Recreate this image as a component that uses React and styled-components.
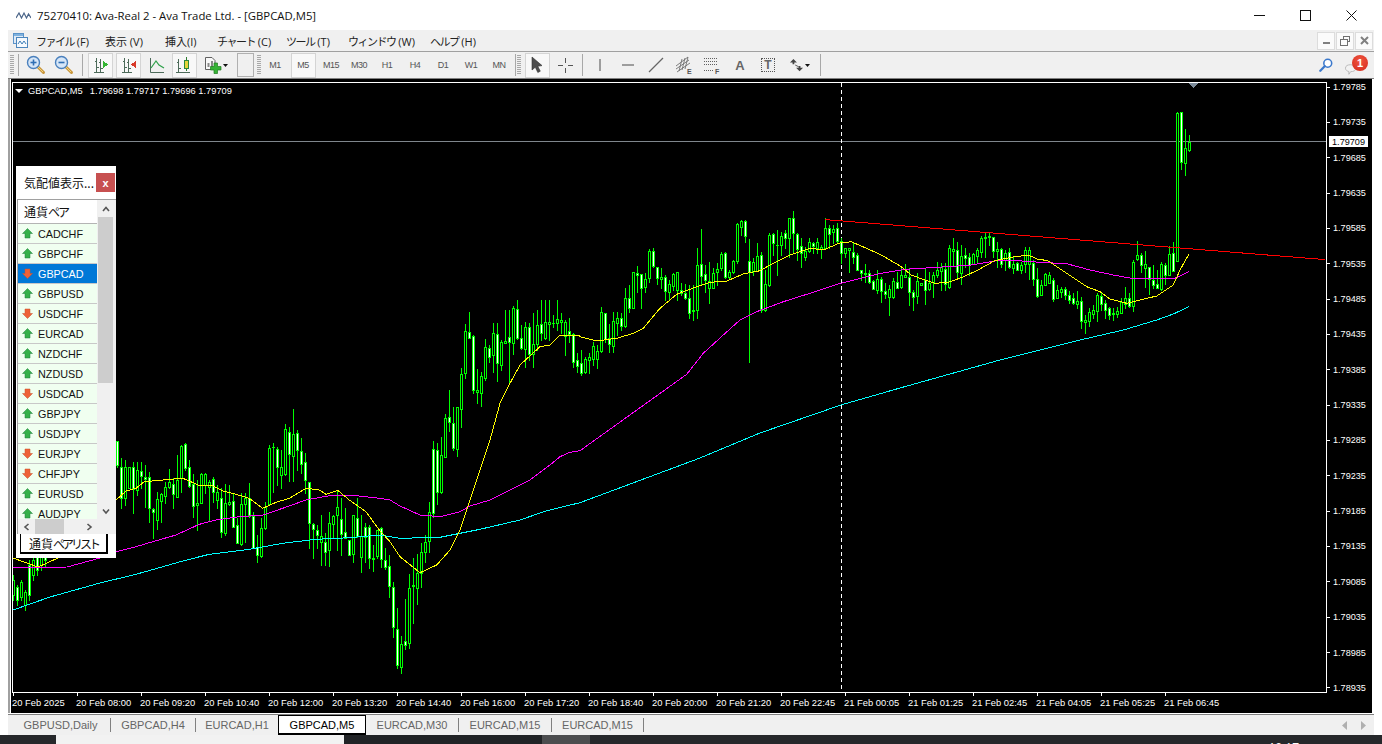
import { Fragment } from "react";
import styled, { createGlobalStyle } from "styled-components";

const GlobalStyle = createGlobalStyle`
  html, body {
    margin: 0;
    padding: 0;
    background: #ffffff;
  }
  * {
    box-sizing: border-box;
  }
`;

const UI_FONT = `"Liberation Sans", Arial, sans-serif`;
const JP_FONT = `"Open Sans", "Noto Sans CJK JP", sans-serif`;

const Page = styled.div`
  width: 1382px;
  height: 744px;
  display: flex;
  flex-direction: column;
  overflow: hidden;
  font-family: ${UI_FONT};
`;

const TitleBar = styled.div`
  height: 30px;
  display: flex;
  align-items: center;
  padding-left: 16px;
  padding-right: 8px;
  background: #ffffff;
`;

const TitleText = styled.span`
  margin-left: 6px;
  font-family: "Open Sans", sans-serif;
  font-size: 11.35px;
  color: #111111;
  white-space: nowrap;
`;

const WindowButtons = styled.div`
  margin-left: auto;
  display: flex;
`;

const WindowButton = styled.div`
  width: 46px;
  height: 30px;
  display: flex;
  align-items: center;
  justify-content: center;
`;

const Main = styled.div`
  margin: 0 8px;
  flex: 1;
  display: flex;
  flex-direction: column;
  min-height: 0;
`;

const MenuBar = styled.div`
  height: 22px;
  flex: none;
  display: flex;
  align-items: center;
  padding-left: 5px;
  background: #f0f0f0;
  border-bottom: 1px solid #a0a0a0;
`;

const MenuItems = styled.div`
  display: flex;
  gap: 19px;
  margin-left: 8px;
`;

const MenuItem = styled.span`
  width: ${(p) => p.$w}px;
  font-family: ${JP_FONT};
  font-size: 11px;
  color: #222222;
  white-space: nowrap;
`;

// the kana in the reference are set tighter than full width
const Kana = styled.span`
  letter-spacing: ${(p) => p.$tight || -1.5}px;
`;

const MdiButtons = styled.div`
  margin-left: auto;
  display: flex;
  gap: 1px;
  padding-right: 1px;
`;

const MdiButton = styled.div`
  width: 18px;
  height: 18px;
  display: flex;
  align-items: center;
  justify-content: center;
  background: #fbfbfb;
  border: 1px solid #dcdcdc;
`;

const ToolBar = styled.div`
  height: 27px;
  flex: none;
  display: flex;
  align-items: center;
  padding-left: 2px;
  background: #f0f0f0;
  border-bottom: 1px solid #808080;
`;

const Grip = styled.div`
  width: 4px;
  height: 20px;
  flex: none;
  margin-left: ${(p) => p.$ml || 0}px;
  background: repeating-linear-gradient(
    to bottom,
    #a8a8a8 0,
    #a8a8a8 1px,
    #f0f0f0 1px,
    #f0f0f0 2px
  );
`;

const Separator = styled.div`
  width: 1px;
  height: 22px;
  flex: none;
  margin-left: ${(p) => p.$ml || 0}px;
  margin-right: ${(p) => p.$mr || 0}px;
  background: #a8a8a8;
`;

const ToolCell = styled.div`
  width: ${(p) => (p.$active ? 25 : p.$w || 28)}px;
  height: ${(p) => (p.$active ? 25 : 22)}px;
  margin: 0 ${(p) => (p.$active ? 1.5 : 0)}px;
  flex: none;
  display: flex;
  align-items: center;
  justify-content: center;
  position: relative;
  background: ${(p) => (p.$active ? "#f8f8f8" : "transparent")};
  border: ${(p) => (p.$active ? "1px solid #d4d4d4" : "none")};
`;

const DropCell = styled(ToolCell)`
  justify-content: flex-start;
  gap: 1px;
  padding-left: ${(p) => p.$pad}px;
`;

const ChatCell = styled(ToolCell)`
  justify-content: flex-start;
  align-items: flex-end;
  padding-left: 0;
`;

const FrameLabel = styled.span`
  font-size: 9px;
  letter-spacing: -0.5px;
  color: #555555;
`;

const DrawLetter = styled.span`
  font-size: 13px;
  font-weight: 700;
  color: #666666;
`;

const TextBoxTool = styled.span`
  width: 14px;
  height: 14px;
  display: flex;
  align-items: center;
  justify-content: center;
  border: 1px dotted #555555;
  font-size: 12px;
  font-weight: 700;
  color: #666666;
`;

const EmptyBox = styled.div`
  width: 17px;
  height: 24px;
  flex: none;
  margin-left: 9px;
  border: 1px solid #b0b0b0;
`;

const ToolSpacer = styled.div`
  flex: 1;
`;

const Group = styled.div`
  display: flex;
  align-items: center;
  margin-left: ${(p) => p.$ml || 0}px;
  margin-right: ${(p) => p.$mr || 0}px;
  gap: ${(p) => p.$gap || 0}px;
`;

const Badge = styled.span`
  position: absolute;
  top: 1px;
  left: 8px;
  width: 16px;
  height: 16px;
  border-radius: 50%;
  display: flex;
  align-items: center;
  justify-content: center;
  background: radial-gradient(circle at 50% 35%, #f0553f, #d42a1c);
  color: #ffffff;
  font-size: 11px;
  font-weight: 700;
`;

const ChartWrap = styled.div`
  height: 634px;
  flex: none;
  display: flex;
  border-left: 2px solid #a0a0a0;
  padding-left: 1px;
  padding-right: 2px;
  background: #ffffff;
`;

const ChartWindow = styled.div`
  flex: 1;
  position: relative;
  display: grid;
  grid-template-columns: 1315px 1fr;
  grid-template-rows: 614px 20px;
  padding-left: 1px;
  background: #000000;
`;

const PlotFrame = styled.div`
  margin-top: 3px;
  position: relative;
  border: 1px solid #ffffff;
  overflow: hidden;
  line-height: 0;
`;

const SymbolCaption = styled.div`
  position: absolute;
  top: 2px;
  left: 2px;
  display: flex;
  align-items: center;
  height: 12px;
  font-size: 9.3px;
  line-height: 12px;
  color: #ffffff;
  white-space: nowrap;
`;

const CaptionArrow = styled.span`
  width: 0;
  height: 0;
  margin-right: 5px;
  border-left: 4px solid transparent;
  border-right: 4px solid transparent;
  border-top: 4px solid #ffffff;
`;

const CaptionPrices = styled.span`
  margin-left: 7px;
`;

const PriceAxis = styled.div`
  position: relative;
  display: flex;
  flex-direction: column;
  justify-content: space-between;
  margin-top: 2px;
  margin-bottom: -1px;
`;

const PriceLabel = styled.div`
  height: 12px;
  display: flex;
  align-items: center;
  font-size: 9.1px;
  color: #ffffff;
`;

const PriceTick = styled.span`
  width: 3px;
  height: 1px;
  margin-right: 3px;
  background: #ffffff;
`;

const CurrentPrice = styled.div`
  position: absolute;
  top: 55px;
  left: 2px;
  width: 39px;
  height: 11px;
  display: flex;
  align-items: center;
  justify-content: center;
  background: #ffffff;
  color: #000000;
  font-size: 9.1px;
`;

const TimeAxis = styled.div`
  grid-column: 1 / span 2;
  display: flex;
  color: #ffffff;
`;

const TimeCell = styled.div`
  width: 64px;
  flex: none;
  display: flex;
  flex-direction: column;
`;

const TimeTick = styled.span`
  width: 1px;
  height: 3px;
  margin-left: 1px;
  background: #ffffff;
`;

const TimeLabel = styled.span`
  margin-top: 1px;
  font-size: 9.4px;
  line-height: 12px;
  white-space: nowrap;
`;

const WatchPanel = styled.div`
  position: absolute;
  top: 87px;
  left: 5px;
  width: 100px;
  height: 392px;
  display: flex;
  flex-direction: column;
  background: #ffffff;
`;

const PanelHead = styled.div`
  height: 33px;
  flex: none;
  display: flex;
  align-items: center;
  padding: 0 1px 0 8px;
  justify-content: space-between;
`;

const PanelTitle = styled.span`
  font-family: "Noto Sans CJK JP", sans-serif;
  font-size: 12px;
  color: #111111;
  white-space: nowrap;
`;

const PanelClose = styled.div`
  width: 19px;
  height: 19px;
  display: flex;
  align-items: center;
  justify-content: center;
  background: #c75050;
  color: #ffffff;
  font-size: 11px;
  font-weight: 700;
`;

const PanelBody = styled.div`
  height: 335px;
  flex: none;
  margin-left: 1px;
  padding-right: 3px;
  display: grid;
  grid-template-columns: 79px 16px;
  grid-template-rows: 319px 16px;
  border-top: 1px solid #a0a0a0;
  border-left: 1px solid #a0a0a0;
  background: #f0f0f0;
`;

const PairList = styled.div`
  overflow: hidden;
  background: #ffffff;
`;

const PairHeader = styled.div`
  height: 24px;
  display: flex;
  align-items: center;
  padding-left: 6px;
  border-bottom: 1px solid #b4b4b4;
  font-family: "Noto Sans CJK JP", sans-serif;
  font-size: 12px;
  color: #111111;
`;

const PairRow = styled.div`
  height: 20px;
  display: flex;
  align-items: center;
  gap: 5px;
  padding-left: 4px;
  border-bottom: 1px solid #c8c8c8;
  background: ${(p) => (p.$selected ? "#0078d7" : "#f0fff0")};
  color: ${(p) => (p.$selected ? "#ffffff" : "#111111")};
  font-size: 10.8px;
`;

const VScroll = styled.div`
  margin-left: 1px;
  display: flex;
  flex-direction: column;
  align-items: stretch;
  background: #f0f0f0;
`;

const ScrollButton = styled.div`
  height: ${(p) => p.$h || 17}px;
  flex: none;
  display: flex;
  align-items: center;
  justify-content: center;
`;

const VThumb = styled.div`
  height: 166px;
  flex: none;
  background: #cdcdcd;
`;

const VTrack = styled.div`
  flex: 1;
`;

const HScroll = styled.div`
  display: flex;
  align-items: center;
  background: #f0f0f0;
`;

const HButton = styled.div`
  width: 17px;
  flex: none;
  display: flex;
  justify-content: center;
`;

const HThumb = styled.div`
  width: 29px;
  height: 16px;
  flex: none;
  background: #cdcdcd;
`;

const HTrack = styled.div`
  flex: 1;
`;

const PanelTabs = styled.div`
  flex: 1;
  padding: 0 0 3px 4px;
  display: flex;
  align-items: flex-start;
  background: #ffffff;
`;

const PanelTab = styled.div`
  width: 88px;
  height: 20px;
  display: flex;
  align-items: center;
  justify-content: center;
  border: 1px solid #000000;
  border-top: none;
  border-right-width: 2px;
  border-bottom-width: 2px;
  font-family: "Noto Sans CJK JP", sans-serif;
  font-size: 12px;
  color: #111111;
  white-space: nowrap;
`;

const TabRule = styled.div`
  height: 2px;
  flex: none;
  border-bottom: 1px solid #808080;
  background: #ffffff;
`;

const TabBar = styled.div`
  height: 20px;
  flex: none;
  display: flex;
  align-items: stretch;
  padding-left: 3px;
  background: #f0f0f0;
`;

const ChartTab = styled.div`
  display: flex;
  align-items: center;
  justify-content: center;
  width: ${(p) => p.$w}px;
  font-size: 11px;
  white-space: nowrap;
  color: ${(p) => (p.$active ? "#000000" : "#666666")};
  background: ${(p) => (p.$active ? "#ffffff" : "transparent")};
  border-top: ${(p) => (p.$active ? "1px solid #000000" : "none")};
  border-left: ${(p) => (p.$active ? "1px solid #000000" : "none")};
  border-right: ${(p) => (p.$active ? "1px solid #000000" : "none")};
  border-bottom: ${(p) => (p.$active ? "2px solid #000000" : "none")};
`;

const TabDivider = styled.span`
  width: 1px;
  height: 14px;
  flex: none;
  align-self: center;
  background: #808080;
`;

const TabArrows = styled.div`
  margin-left: auto;
  display: flex;
  align-items: center;
  gap: 14px;
  padding-right: 8px;
`;

const TaskBar = styled.div`
  height: 9px;
  flex: none;
  display: flex;
  background: #26282b;
  overflow: hidden;
`;

const TaskSlot = styled.div`
  width: ${(p) => p.$w}px;
  flex: none;
  background: ${(p) => p.$bg};
`;

const TaskClock = styled.div`
  margin-left: auto;
  margin-right: 83px;
  padding-top: 6px;
  font-family: "Open Sans", sans-serif;
  font-size: 12px;
  line-height: 14px;
  color: #ffffff;
`;

// chart rows: wick top, wick bottom, body top, body bottom, 1 = white body
// values were read off 3x crops, so they are divided by 3 below
const candleRuns = [
  {
    x: 117,
    y: 405,
    rows: [
      [108, 185, 108, 180, 1], [160, 310, 185, 280, 1], [165, 300, 186, 280], [186, 250, 186, 250],
      [170, 325, 187, 252, 1], [172, 270, 195, 254], [170, 250, 197, 214, 1], [180, 305, 216, 221, 1],
      [200, 350, 217, 310, 1], [310, 400, 313, 320, 1], [262, 372, 283, 345], [265, 350, 268, 287],
      [230, 295, 247, 272], [192, 250, 232, 245], [220, 310, 238, 268, 1], [150, 275, 224, 275],
      [120, 260, 122, 220], [115, 195, 118, 188, 1], [165, 245, 187, 242, 1], [208, 335, 238, 304, 1],
      [225, 375, 295, 299], [205, 295, 208, 295], [205, 265, 208, 240], [225, 345, 230, 245],
      [215, 290, 222, 260, 1], [240, 310, 260, 284], [250, 395, 280, 382, 1], [238, 390, 295, 385],
      [240, 300, 290, 298], [265, 365, 288, 365, 1], [340, 412, 360, 413, 1], [265, 420, 298, 416],
      [265, 410, 280, 297], [235, 335, 280, 332, 1], [320, 430, 332, 430, 1], [390, 472, 427, 450, 1],
      [340, 455, 370, 452], [290, 372, 305, 368], [120, 300, 130, 296], [115, 260, 125, 127],
      [125, 240, 132, 187, 1], [135, 250, 185, 209], [58, 210, 73, 206], [65, 228, 82, 148, 1],
      [12, 228, 88, 152], [75, 195, 85, 135, 1], [100, 205, 137, 176, 1], [145, 265, 172, 225, 1],
      [232, 430, 232, 355, 1], [355, 460, 358, 373, 1], [360, 430, 375, 391, 1], [330, 480, 392, 412],
      [385, 480, 412, 440, 1], [320, 482, 355, 434], [330, 400, 332, 356], [255, 435, 305, 329],
      [280, 450, 343, 386, 1], [310, 400, 382, 400, 1], [405, 450, 405, 450, 1], [330, 470, 330, 447],
      [280, 395, 340, 392, 1], [330, 500, 392, 455], [355, 470, 367, 397, 1], [360, 490, 367, 460, 1],
      [420, 497, 460, 462], [375, 460, 375, 452],
    ],
  },
  {
    x: 381,
    y: 300,
    rows: [
      [682, 800, 685, 778, 1], [745, 808, 780, 802, 1], [765, 890, 798, 858, 1], [845, 1010, 862, 980, 1],
      [925, 1105, 988, 1095, 1], [1008, 1118, 1033, 1100], [897, 1048, 1023, 1034, 1], [822, 1045, 865, 1030],
      [775, 968, 855, 857], [762, 912, 820, 863], [728, 862, 757, 820], [705, 785, 727, 755],
      [607, 757, 635, 724], [422, 650, 448, 638, 1], [430, 612, 451, 575, 1], [412, 578, 466, 575],
      [342, 472, 355, 470], [270, 392, 352, 365, 1], [322, 450, 370, 443, 1], [322, 467, 322, 446],
      [205, 380, 222, 328], [72, 235, 94, 218], [37, 115, 97, 113, 1], [105, 278, 108, 270, 1],
      [208, 310, 270, 275], [215, 318, 228, 278], [118, 240, 142, 235], [135, 185, 145, 170, 1],
      [68, 215, 100, 164], [68, 242, 103, 190, 1], [120, 210, 127, 194], [30, 130, 122, 128],
      [30, 250, 112, 125, 1], [18, 162, 25, 128], [0, 118, 28, 115, 1], [75, 148, 113, 143, 1],
      [65, 200, 82, 146], [70, 180, 82, 162, 1], [40, 200, 133, 163], [30, 150, 76, 133],
      [0, 120, 72, 100, 1], [0, 118, 67, 115], [0, 120, 67, 71], [45, 80, 68, 70],
      [0, 90, 58, 70], [40, 100, 60, 65], [60, 165, 67, 108], [55, 125, 92, 103, 1],
      [100, 200, 103, 185, 1], [160, 215, 180, 197, 1],
    ],
  },
  {
    x: 581,
    y: 205,
    rows: [
      [435, 510, 475, 505, 1], [455, 505, 462, 500], [445, 505, 455, 465], [410, 480, 423, 461],
      [420, 490, 438, 461], [305, 440, 320, 437], [325, 410, 325, 402, 1], [358, 440, 400, 418, 1],
      [320, 440, 349, 422], [320, 390, 340, 355], [325, 375, 340, 362, 1], [250, 365, 280, 364],
      [240, 320, 280, 310, 1], [202, 310, 202, 310], [183, 260, 205, 210, 1], [208, 308, 208, 248, 1],
      [205, 262, 222, 245], [133, 230, 138, 218], [130, 185, 137, 182, 1], [185, 238, 187, 218, 1],
      [190, 250, 217, 221], [210, 285, 217, 257, 1], [225, 285, 238, 260], [205, 255, 207, 242],
      [200, 285, 202, 254], [235, 270, 254, 265, 1], [238, 282, 264, 280, 1], [240, 340, 280, 325, 1],
      [240, 345, 316, 319], [130, 340, 180, 316], [72, 240, 178, 213, 1], [180, 260, 208, 225, 1],
      [170, 295, 227, 248], [190, 250, 205, 250], [175, 240, 193, 202], [140, 195, 148, 190],
      [140, 220, 145, 217, 1], [195, 220, 202, 216], [165, 205, 167, 202], [55, 175, 58, 167],
      [45, 90, 49, 65], [45, 110, 48, 92, 1], [102, 470, 167, 201, 1], [160, 210, 172, 198],
      [115, 195, 152, 198], [140, 320, 150, 316, 1], [195, 318, 238, 316], [85, 242, 90, 241],
      [85, 150, 88, 115, 1], [75, 210, 121, 121], [80, 150, 92, 121], [75, 130, 85, 100, 1],
      [40, 155, 40, 100], [18, 145, 40, 85, 1], [85, 165, 88, 132, 1], [100, 187, 122, 145, 1],
      [125, 165, 138, 155], [100, 140, 112, 138], [110, 145, 115, 122, 1], [100, 145, 112, 128],
      [120, 160, 125, 132], [40, 130, 70, 128], [60, 130, 70, 87, 1], [60, 115, 72, 82],
      [55, 115, 70, 108, 1],
    ],
  },
  {
    x: 841,
    y: 205,
    rows: [
      [100, 175, 107, 143, 1], [130, 155, 130, 143], [128, 200, 130, 135], [110, 175, 140, 155, 1],
      [145, 195, 151, 194, 1], [195, 225, 196, 203, 1], [178, 230, 203, 206], [195, 235, 203, 230, 1],
      [225, 250, 229, 252, 1], [195, 265, 222, 256], [215, 290, 222, 257, 1], [235, 278, 259, 267, 1],
      [240, 330, 253, 276], [220, 280, 228, 276], [200, 250, 232, 248, 1], [185, 250, 210, 245],
      [178, 215, 211, 216], [190, 300, 215, 260, 1], [255, 315, 262, 275, 1], [205, 295, 229, 272],
      [235, 240, 235, 240], [193, 297, 225, 254, 1], [200, 255, 235, 252], [200, 275, 210, 232],
      [172, 215, 195, 209], [175, 255, 187, 199], [175, 255, 193, 238, 1], [120, 250, 128, 245],
      [98, 180, 133, 137], [110, 215, 136, 202, 1], [120, 237, 154, 203], [130, 185, 150, 158, 1],
      [145, 210, 156, 180, 1], [145, 175, 148, 178], [130, 175, 135, 152], [92, 155, 99, 140],
      [85, 155, 95, 98], [85, 120, 95, 93], [95, 155, 97, 137, 1], [110, 185, 133, 137],
      [130, 185, 133, 178, 1], [135, 195, 145, 165], [130, 190, 142, 185, 1], [155, 205, 178, 188],
      [170, 195, 175, 194, 1], [170, 205, 181, 194], [125, 200, 135, 178], [125, 222, 136, 178],
      [165, 240, 175, 222, 1], [190, 275, 222, 272, 1],
    ],
  },
  {
    x: 1041,
    y: 90,
    rows: [
      [570, 615, 585, 615], [548, 585, 552, 585], [545, 580, 555, 578], [565, 632, 570, 628, 1],
      [585, 625, 600, 625], [590, 622, 597, 606], [592, 628, 597, 615, 1], [603, 640, 616, 630, 1],
      [610, 642, 625, 640, 1], [603, 655, 633, 642], [620, 715, 633, 693, 1], [675, 728, 690, 695],
      [655, 708, 667, 693], [645, 685, 660, 673], [610, 692, 616, 662], [610, 660, 618, 642, 1],
      [630, 685, 640, 660, 1], [650, 688, 655, 675, 1], [655, 690, 670, 672], [650, 680, 663, 673],
      [625, 670, 636, 668], [590, 655, 625, 642], [610, 650, 625, 647, 1], [510, 662, 515, 647],
      [453, 510, 496, 506], [490, 545, 495, 524, 1], [483, 590, 523, 533], [530, 612, 532, 568, 1],
      [525, 595, 570, 584, 1], [540, 592, 583, 594, 1], [515, 600, 522, 597], [520, 582, 526, 555, 1],
      [468, 555, 492, 554], [455, 540, 490, 542, 1], [66, 512, 70, 512], [66, 236, 66, 215, 1],
      [118, 255, 175, 218], [135, 182, 155, 179],
    ],
  },
  {
    x: 13,
    y: 0,
    rows: [
      [1725, 1800, 1740, 1785], [1755, 1815, 1760, 1800, 1], [1740, 1800, 1745, 1790], [1770, 1830, 1775, 1815],
      [1680, 1800, 1695, 1785, 1], [1668, 1740, 1680, 1725], [1650, 1725, 1665, 1710, 1], [1650, 1710, 1660, 1695],
      [1640, 1700, 1650, 1680, 1],
    ],
  },
];

const candles = candleRuns.flatMap((run) =>
  run.rows.map(([wt, wb, bt, bb, white], i) => ({
    x: run.x + i * 4,
    wickTop: Math.round(run.y + wt / 3),
    wickBottom: Math.round(run.y + wb / 3),
    bodyTop: Math.round(run.y + Math.min(bt, bb) / 3),
    bodyBottom: Math.round(run.y + Math.max(bt, bb) / 3),
    white: !!white,
  }))
);

const seg = (x0, y0, pts) => pts.map(([x, y]) => [x0 + x / 3, y0 + y / 3]);

const yellowLine = [
  [13, 558], [38, 567], [58, 558], [90, 530],
  ...seg(116, 405, [[0, 285], [30, 258], [60, 250], [85, 230], [140, 225], [200, 220], [225, 230], [245, 240], [290, 242], [320, 258], [360, 268], [400, 280], [440, 310], [480, 292], [520, 280], [570, 250], [610, 255], [630, 268], [665, 256], [700, 285], [750, 320], [790, 375]]),
  ...seg(380, 300, [[30, 725], [60, 770], [120, 818], [170, 795], [210, 750], [240, 690], [270, 600], [300, 510], [330, 420], [360, 310], [390, 250], [420, 195], [480, 140], [510, 135], [540, 105], [598, 105]]),
  ...seg(580, 205, [[0, 395], [50, 408], [110, 400], [160, 385], [190, 370], [240, 310], [290, 268], [350, 245], [390, 232], [440, 228], [490, 207], [540, 197], [570, 180], [630, 150], [690, 130], [730, 135], [770, 118]]),
  ...seg(838, 205, [[0, 115], [40, 110], [90, 132], [130, 150], [190, 185], [220, 210], [260, 225], [290, 235], [330, 232], [370, 218], [420, 195], [470, 167], [520, 157], [570, 150], [605, 165]]),
  ...seg(1040, 90, [[0, 508], [25, 513], [80, 550], [140, 590], [180, 605], [210, 627], [260, 640], [300, 630], [350, 618], [400, 585], [420, 540], [447, 492]]),
];

const magentaLine = [
  [13, 568], [67, 567], [100, 558],
  ...seg(116, 405, [[0, 440], [50, 428], [110, 410], [180, 390], [250, 358], [300, 345], [370, 335], [440, 330], [500, 310], [570, 285], [640, 272], [720, 272], [790, 280]]),
  ...seg(380, 300, [[30, 600], [60, 618], [120, 645], [180, 650], [240, 635], [270, 618], [330, 600], [390, 570], [450, 540], [510, 495], [540, 470], [570, 457], [600, 452]]),
  ...seg(580, 205, [[320, 508], [370, 445], [430, 390], [480, 345], [530, 320], [610, 290], [690, 265], [775, 237]]),
  ...seg(838, 205, [[0, 237], [60, 222], [130, 205], [200, 193], [300, 187], [400, 180], [470, 168], [540, 167], [605, 172]]),
  ...seg(1040, 90, [[0, 517], [80, 521], [150, 540], [220, 555], [280, 566], [400, 567], [447, 545]]),
];

const cyanLine = [
  [13, 610], [50, 597], [100, 583],
  ...seg(116, 405, [[60, 508], [130, 488], [200, 468], [280, 448], [400, 433], [500, 415], [600, 403], [700, 398], [790, 390]]),
  ...seg(380, 300, [[60, 715], [180, 712], [300, 688], [420, 660], [500, 632], [600, 608]]),
  [700, 458], [760, 433], [841, 405], [900, 388], [1000, 360],
  ...seg(1040, 90, [[129, 748], [250, 720], [350, 690], [400, 672], [447, 650]]),
];

const toPoints = (line) => line.map(([x, y]) => `${x.toFixed(1)},${y.toFixed(1)}`).join(" ");

const prices = [
  "1.79785", "1.79735", "1.79685", "1.79635", "1.79585", "1.79535", "1.79485", "1.79435", "1.79385",
  "1.79335", "1.79285", "1.79235", "1.79185", "1.79135", "1.79085", "1.79035", "1.78985", "1.78935",
];

const times = [
  "20 Feb 2025", "20 Feb 08:00", "20 Feb 09:20", "20 Feb 10:40", "20 Feb 12:00", "20 Feb 13:20", "20 Feb 14:40",
  "20 Feb 16:00", "20 Feb 17:20", "20 Feb 18:40", "20 Feb 20:00", "20 Feb 21:20", "20 Feb 22:45", "21 Feb 00:05",
  "21 Feb 01:25", "21 Feb 02:45", "21 Feb 04:05", "21 Feb 05:25", "21 Feb 06:45",
];

const pairs = [
  ["CADCHF", "up"], ["GBPCHF", "up"], ["GBPCAD", "down", true], ["GBPUSD", "up"], ["USDCHF", "down"],
  ["EURCAD", "up"], ["NZDCHF", "up"], ["NZDUSD", "up"], ["USDCAD", "down"], ["GBPJPY", "up"],
  ["USDJPY", "up"], ["EURJPY", "down"], ["CHFJPY", "down"], ["EURUSD", "up"], ["AUDJPY", "up"],
];

const menus = [
  { kana: "ファイル", rest: " (F)", w: 50 },
  { rest: "表示 (V)", w: 41 },
  { rest: "挿入(I)", w: 33 },
  { kana: "チャート", rest: " (C)", w: 50 },
  { kana: "ツール", rest: " (T)", w: 43 },
  { kana: "ウィンドウ", rest: " (W)", w: 63 },
  { kana: "ヘルプ", rest: " (H)", w: 48 },
];
const frames = ["M1", "M5", "M15", "M30", "H1", "H4", "D1", "W1", "MN"];

const tabs = [
  { label: "GBPUSD,Daily", w: 99, divider: true },
  { label: "GBPCAD,H4", w: 84, divider: true },
  { label: "EURCAD,H1", w: 82 },
  { label: "GBPCAD,M5", w: 88, active: true },
  { label: "EURCAD,M30", w: 92, divider: true },
  { label: "EURCAD,M15", w: 92, divider: true },
  { label: "EURCAD,M15", w: 91, divider: true },
];

function CandleChart() {
  return (
    <svg width="1313" height="609" viewBox="13 83 1313 609" shapeRendering="crispEdges">
      <line x1="13" y1="141.5" x2="1326" y2="141.5" stroke="#7f868c" />
      <line x1="841.5" y1="83" x2="841.5" y2="692" stroke="#ffffff" strokeDasharray="4 3" />
      {candles.map((c) => (
        <g key={c.x}>
          <rect x={c.x} y={c.wickTop} width="1" height={c.wickBottom - c.wickTop + 1} fill="#00ff00" />
          <rect x={c.x - 1} y={c.bodyTop} width="3" height={c.bodyBottom - c.bodyTop + 1} fill="#00ff00" />
          {c.bodyBottom - c.bodyTop > 1 && (
            <rect
              x={c.x}
              y={c.bodyTop + 1}
              width="1"
              height={c.bodyBottom - c.bodyTop - 1}
              fill={c.white ? "#ffffff" : "#000000"}
            />
          )}
        </g>
      ))}
      <polyline points={toPoints(cyanLine)} fill="none" stroke="#00ffff" />
      <polyline points={toPoints(magentaLine)} fill="none" stroke="#ff00ff" />
      <polyline points={toPoints(yellowLine)} fill="none" stroke="#ffff00" />
      <line x1="825" y1="219.6" x2="1325" y2="259.6" stroke="#ff0000" />
      <polygon points="1189,83 1198,83 1193.5,88" fill="#7b8a99" />
    </svg>
  );
}

function LogoIcon() {
  return (
    <svg width="15" height="8" viewBox="0 0 15 8">
      <path d="M0 7 L3 2 L5.5 7 L8 2 L10.5 7 L12.5 3 L15 7" fill="none" stroke="#4a6488" strokeWidth="1.2" />
    </svg>
  );
}

function MenuChartIcon() {
  return (
    <svg width="15" height="15" viewBox="0 0 15 15">
      <rect x="0.5" y="0.5" width="10" height="10" fill="#dfeaf6" stroke="#5b93c9" />
      <rect x="3.5" y="4.5" width="11" height="10" fill="#f5f9fd" stroke="#4c86bd" />
      <path d="M5 11 L7 8 L9 11 L11 8 L13 11" fill="none" stroke="#3f7fb8" />
      <rect x="1" y="1" width="9" height="2" fill="#7fb2de" />
    </svg>
  );
}

function ZoomIcon({ plus }) {
  return (
    <svg width="20" height="20" viewBox="0 0 20 20">
      <path d="M11 11 L17.5 17.5" stroke="#c8963c" strokeWidth="3" strokeLinecap="round" />
      <path d="M11.5 11.5 L17 17" stroke="#f2d27a" strokeWidth="1" />
      <circle cx="7.5" cy="7.5" r="6" fill="#d6e6f7" stroke="#4a80bd" strokeWidth="1.4" />
      <path d="M4.5 7.5 H10.5" stroke="#2f6fb4" strokeWidth="1.6" />
      {plus && <path d="M7.5 4.5 V10.5" stroke="#2f6fb4" strokeWidth="1.6" />}
    </svg>
  );
}

function BarsIcon({ kind }) {
  return (
    <svg width="17" height="18" viewBox="0 0 17 18" shapeRendering="crispEdges">
      <path d="M2 16.5 H12 M4.5 2 V16 M2.5 5.5 H4.5 M4.5 11.5 H6.5" stroke="#4d6b5a" fill="none" />
      <path d="M8.5 3 V16 M6.5 6.5 H8.5 M8.5 12.5 H10.5" stroke="#4d6b5a" fill="none" />
      {kind === "play" && <polygon points="11,5 16,8.5 11,12" fill="#33b533" />}
      {kind === "back" && <polygon points="16,5 11,8.5 16,12" fill="#d83a2a" />}
    </svg>
  );
}

function LineChartIcon() {
  return (
    <svg width="17" height="18" viewBox="0 0 17 18">
      <path d="M2.5 2 V16.5 H16" stroke="#4d6b5a" fill="none" />
      <path d="M3 12 L8 5 L11 9 L16 12" stroke="#2ea04a" fill="none" strokeWidth="1.2" />
    </svg>
  );
}

function CandleToolIcon() {
  return (
    <svg width="18" height="18" viewBox="0 0 18 18" shapeRendering="crispEdges">
      <path d="M1 16.5 H15 M3.5 3 V16 M1.5 6.5 H3.5 M3.5 12.5 H5.5" stroke="#4d6b5a" fill="none" />
      <path d="M11.5 1 V15" stroke="#2e7d32" fill="none" />
      <rect x="9.5" y="4.5" width="4" height="8" fill="#e6d53a" stroke="#2e8b3a" />
    </svg>
  );
}

function NewChartIcon() {
  return (
    <svg width="18" height="18" viewBox="0 0 18 18">
      <path d="M1.5 1.5 H8 L11 4.5 V13.5 H1.5 Z" fill="#f8f8f8" stroke="#606060" />
      <path d="M3.5 7 H5.5 V11 H3.5 Z M7 5 H9 V11 H7 Z" fill="#888888" />
      <path d="M10 7 H13.5 V10.5 H17 V14 H13.5 V17.5 H10 V14 H6.5 V10.5 H10 Z" fill="#36b336" stroke="#1f7d1f" strokeWidth="0.7" />
    </svg>
  );
}

function Caret() {
  return (
    <svg width="5" height="3" viewBox="0 0 5 3">
      <polygon points="0,0 5,0 2.5,3" fill="#111111" />
    </svg>
  );
}

function CursorIcon() {
  return (
    <svg width="14" height="18" viewBox="0 0 14 18">
      <polygon points="2,1 2,14 5.3,11.2 7.8,16.5 10.3,15.2 7.8,10.3 12,9.6" fill="#4c4c4c" stroke="#303030" strokeWidth="0.6" />
    </svg>
  );
}

function CrosshairIcon() {
  return (
    <svg width="17" height="17" viewBox="0 0 17 17" shapeRendering="crispEdges">
      <path d="M8.5 1 V6 M8.5 11 V16 M1 8.5 H6 M11 8.5 H16" stroke="#555555" fill="none" />
    </svg>
  );
}

function StrokeIcon({ d }) {
  return (
    <svg width="16" height="16" viewBox="0 0 16 16">
      <path d={d} stroke="#666666" strokeWidth="1.2" fill="none" />
    </svg>
  );
}

function FiboChannelIcon() {
  return (
    <svg width="18" height="18" viewBox="0 0 18 18">
      <path d="M1 10 L13 1 M1 13 L14 4 M2 16 L15 7 M4 15 L7 3 M7 14 L10 2 M10 13 L13 1" stroke="#707070" strokeWidth="0.9" fill="none" />
      <text x="12" y="17.5" fontSize="7" fontWeight="700" fontFamily="Liberation Sans" fill="#555555">E</text>
    </svg>
  );
}

function FiboLevelsIcon() {
  return (
    <svg width="18" height="18" viewBox="0 0 18 18" shapeRendering="crispEdges">
      <path d="M1 2.5 H15 M1 5.5 H15 M1 8.5 H15 M1 14.5 H11" stroke="#606060" strokeDasharray="1 1" fill="none" />
      <text x="12" y="17.5" fontSize="7" fontWeight="700" fontFamily="Liberation Sans" fill="#555555">F</text>
    </svg>
  );
}

function ArrowsIcon() {
  return (
    <svg width="15" height="14" viewBox="0 0 17 16">
      <polygon points="5,1 9,5 6,5 6,7 4,7 4,5 1,5" fill="#444444" />
      <polygon points="12,15 16,11 13,11 13,9 11,9 11,11 8,11" fill="#444444" />
      <path d="M7 8 L11 10" stroke="#444444" />
    </svg>
  );
}

function SearchIcon() {
  return (
    <svg width="14" height="14" viewBox="0 0 16 16">
      <circle cx="10" cy="6" r="4.5" fill="#ffffff" stroke="#3a78cc" strokeWidth="1.8" />
      <path d="M6.5 9.5 L1.5 14.5" stroke="#3a78cc" strokeWidth="2.6" strokeLinecap="round" />
    </svg>
  );
}

function ChatIcon() {
  return (
    <svg width="15" height="13" viewBox="0 0 16 15">
      <path d="M1 6 C1 3 4 2 7 2 C11 2 13 4 13 6 C13 9 10 10 7 10 L5 13 L5 9.8 C3 9.5 1 8 1 6 Z" fill="#f2f2f2" stroke="#b4b4b4" />
    </svg>
  );
}

function PairArrow({ dir }) {
  const up = dir === "up";
  return (
    <svg width="11" height="11" viewBox="0 0 11 11">
      <polygon
        points={up ? "5.5,0.5 10.5,5.5 8,5.5 8,10 3,10 3,5.5 0.5,5.5" : "5.5,10.5 10.5,5.5 8,5.5 8,1 3,1 3,5.5 0.5,5.5"}
        fill={up ? "#34b048" : "#ee6238"}
        stroke={up ? "#1e7f3c" : "#c8502a"}
        strokeWidth="0.5"
      />
    </svg>
  );
}

function Chevron({ dir, size = 10, color = "#555555" }) {
  const paths = {
    up: "M2 7 L5 3.5 L8 7",
    down: "M2 3.5 L5 7 L8 3.5",
    left: "M6.5 2 L3 5 L6.5 8",
    right: "M3.5 2 L7 5 L3.5 8",
  };
  return (
    <svg width={size} height={size} viewBox="0 0 10 10">
      <path d={paths[dir]} fill="none" stroke={color} strokeWidth="1.6" />
    </svg>
  );
}

function TabArrow({ right }) {
  return (
    <svg width="5" height="9" viewBox="0 0 5 9">
      <polygon points={right ? "0,0 5,4.5 0,9" : "5,0 0,4.5 5,9"} fill="#b0b0b0" />
    </svg>
  );
}

function App() {
  return (
    <>
      <GlobalStyle />
      <Page>
        <TitleBar>
          <LogoIcon />
          <TitleText>75270410: Ava-Real 2 - Ava Trade Ltd. - [GBPCAD,M5]</TitleText>
          <WindowButtons>
            <WindowButton>
              <svg width="11" height="11" viewBox="0 0 11 11" shapeRendering="crispEdges">
                <path d="M0 5.5 H11" stroke="#111111" />
              </svg>
            </WindowButton>
            <WindowButton>
              <svg width="11" height="11" viewBox="0 0 11 11" shapeRendering="crispEdges">
                <rect x="0.5" y="0.5" width="10" height="10" fill="none" stroke="#111111" />
              </svg>
            </WindowButton>
            <WindowButton>
              <svg width="11" height="11" viewBox="0 0 11 11">
                <path d="M0.5 0.5 L10.5 10.5 M10.5 0.5 L0.5 10.5" stroke="#111111" />
              </svg>
            </WindowButton>
          </WindowButtons>
        </TitleBar>

        <Main>
          <MenuBar>
            <MenuChartIcon />
            <MenuItems>
              {menus.map((m) => (
                <MenuItem key={m.rest} $w={m.w}>
                  {m.kana && <Kana>{m.kana}</Kana>}
                  {m.rest}
                </MenuItem>
              ))}
            </MenuItems>
            <MdiButtons>
              <MdiButton>
                <svg width="9" height="9" viewBox="0 0 9 9" shapeRendering="crispEdges">
                  <rect x="1" y="6" width="7" height="2" fill="#808080" />
                </svg>
              </MdiButton>
              <MdiButton>
                <svg width="10" height="10" viewBox="0 0 10 10" shapeRendering="crispEdges">
                  <path d="M3.5 2.5 V0.5 H9.5 V5.5 H7.5" fill="none" stroke="#707070" />
                  <rect x="0.5" y="3.5" width="7" height="6" fill="none" stroke="#707070" />
                </svg>
              </MdiButton>
              <MdiButton>
                <svg width="9" height="9" viewBox="0 0 9 9">
                  <path d="M1 1 L8 8 M8 1 L1 8" stroke="#808080" strokeWidth="2" />
                </svg>
              </MdiButton>
            </MdiButtons>
          </MenuBar>

          <ToolBar>
            <Grip />
            <Separator $ml={4} $mr={3} />
            <ToolCell>
              <ZoomIcon plus />
            </ToolCell>
            <ToolCell>
              <ZoomIcon />
            </ToolCell>
            <Separator $ml={4} $mr={3} />
            <ToolCell $active>
              <BarsIcon kind="play" />
            </ToolCell>
            <ToolCell $active>
              <BarsIcon kind="back" />
            </ToolCell>
            <ToolCell>
              <LineChartIcon />
            </ToolCell>
            <ToolCell $active>
              <CandleToolIcon />
            </ToolCell>
            <DropCell $w={30} $pad={6}>
              <NewChartIcon />
              <Caret />
            </DropCell>
            <EmptyBox />
            <Grip $ml={3} />
            {frames.map((f) => (
              <ToolCell key={f} $active={f === "M5"}>
                <FrameLabel>{f}</FrameLabel>
              </ToolCell>
            ))}
            <Separator $ml={2} />
            <Grip $ml={1} />
            <Group $ml={2}>
              <ToolCell $active>
                <CursorIcon />
              </ToolCell>
              <ToolCell>
                <CrosshairIcon />
              </ToolCell>
            </Group>
            <Separator $ml={3} />
            <Group $ml={3}>
              <ToolCell>
                <StrokeIcon d="M8 2 V14" />
              </ToolCell>
              <ToolCell>
                <StrokeIcon d="M2 8 H14" />
              </ToolCell>
              <ToolCell>
                <StrokeIcon d="M1 15 L15 1" />
              </ToolCell>
              <ToolCell>
                <FiboChannelIcon />
              </ToolCell>
              <ToolCell>
                <FiboLevelsIcon />
              </ToolCell>
              <ToolCell>
                <DrawLetter>A</DrawLetter>
              </ToolCell>
              <ToolCell>
                <TextBoxTool>T</TextBoxTool>
              </ToolCell>
              <DropCell $w={30} $pad={7}>
                <ArrowsIcon />
                <Caret />
              </DropCell>
            </Group>
            <Separator $ml={8} />
            <ToolSpacer />
            <Group $gap={4} $mr={2}>
              <ToolCell>
                <SearchIcon />
              </ToolCell>
              <ChatCell>
                <ChatIcon />
                <Badge>1</Badge>
              </ChatCell>
            </Group>
          </ToolBar>

          <ChartWrap>
            <ChartWindow>
              <PlotFrame>
                <CandleChart />
                <SymbolCaption>
                  <CaptionArrow />
                  GBPCAD,M5
                  <CaptionPrices>1.79698 1.79717 1.79696 1.79709</CaptionPrices>
                </SymbolCaption>
              </PlotFrame>
              <PriceAxis>
                {prices.map((p) => (
                  <PriceLabel key={p}>
                    <PriceTick />
                    {p}
                  </PriceLabel>
                ))}
                <CurrentPrice>1.79709</CurrentPrice>
              </PriceAxis>
              <TimeAxis>
                {times.map((t) => (
                  <TimeCell key={t}>
                    <TimeTick />
                    <TimeLabel>{t}</TimeLabel>
                  </TimeCell>
                ))}
              </TimeAxis>

              <WatchPanel>
                <PanelHead>
                  <PanelTitle>気配値表示...</PanelTitle>
                  <PanelClose>x</PanelClose>
                </PanelHead>
                <PanelBody>
                  <PairList>
                    <PairHeader>
                      通貨<Kana $tight={-2}>ペア</Kana>
                    </PairHeader>
                    {pairs.map(([name, dir, selected]) => (
                      <PairRow key={name} $selected={selected}>
                        <PairArrow dir={dir} />
                        {name}
                      </PairRow>
                    ))}
                  </PairList>
                  <VScroll>
                    <ScrollButton>
                      <Chevron dir="up" />
                    </ScrollButton>
                    <VThumb />
                    <VTrack />
                    <ScrollButton>
                      <Chevron dir="down" />
                    </ScrollButton>
                  </VScroll>
                  <HScroll>
                    <HButton>
                      <Chevron dir="left" />
                    </HButton>
                    <HThumb />
                    <HTrack />
                    <HButton>
                      <Chevron dir="right" />
                    </HButton>
                  </HScroll>
                </PanelBody>
                <PanelTabs>
                  <PanelTab>
                    通貨<Kana $tight={-3}>ペアリスト</Kana>
                  </PanelTab>
                </PanelTabs>
              </WatchPanel>
            </ChartWindow>
          </ChartWrap>

          <TabRule />
          <TabBar>
            {tabs.map((t, i) => (
              <Fragment key={i}>
                <ChartTab $w={t.w} $active={t.active}>
                  {t.label}
                </ChartTab>
                {t.divider && <TabDivider />}
              </Fragment>
            ))}
            <TabArrows>
              <TabArrow />
              <TabArrow right />
            </TabArrows>
          </TabBar>
        </Main>

        <TaskBar>
          <TaskSlot $w={56} $bg="#26282b" />
          <TaskSlot $w={288} $bg="#f2f2f2" />
          <TaskSlot $w={198} $bg="#212326" />
          <TaskSlot $w={48} $bg="#4c4d4f" />
          <TaskClock>10:17</TaskClock>
        </TaskBar>
      </Page>
    </>
  );
}

export default App;
